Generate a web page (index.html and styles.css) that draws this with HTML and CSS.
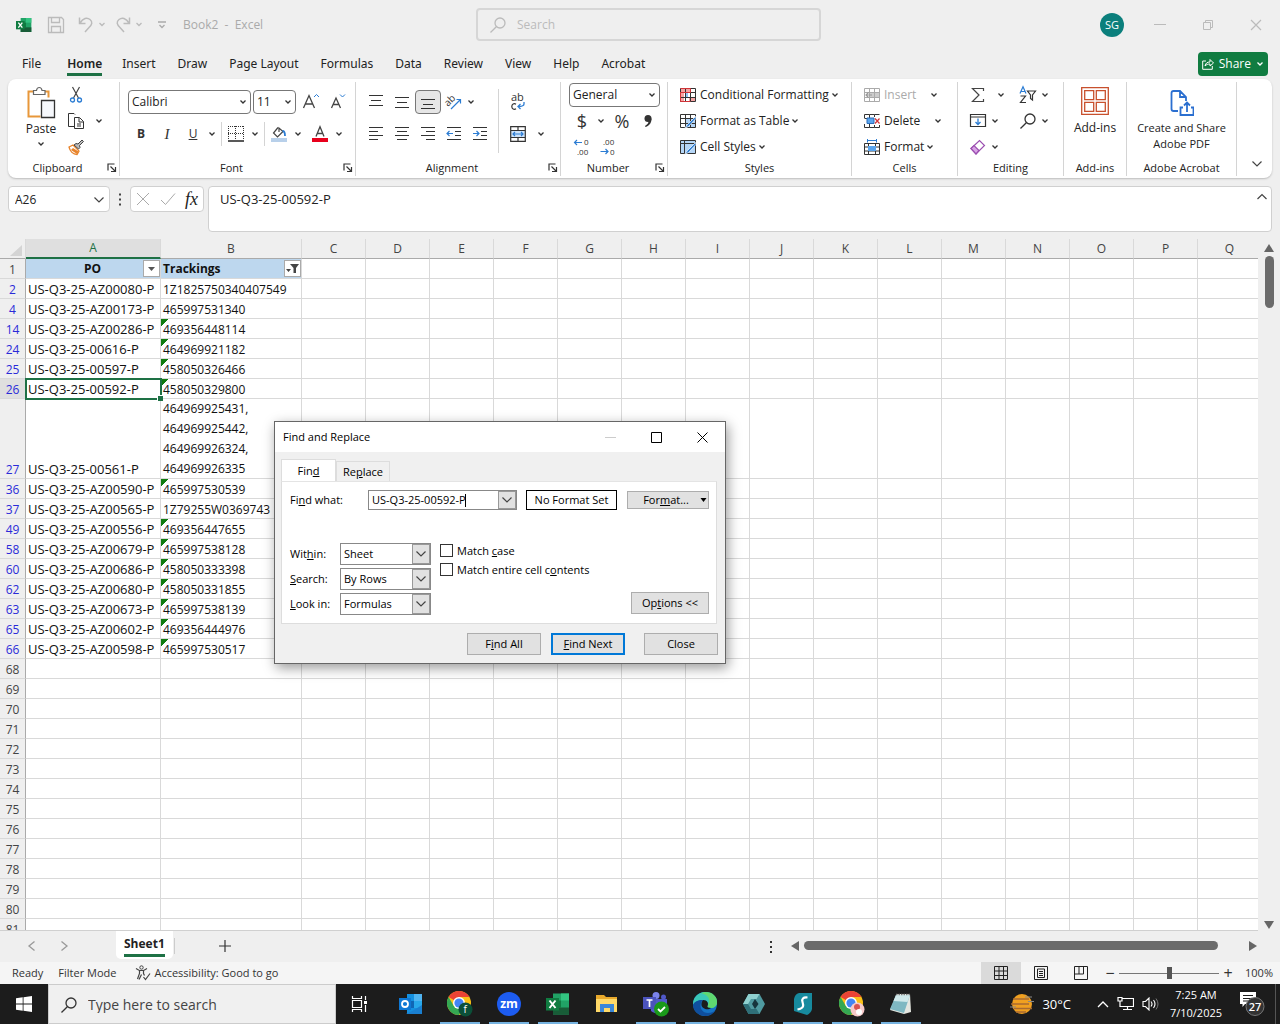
FILE: index.html
```
<!DOCTYPE html>
<html lang="en">
<head>
<meta charset="utf-8">
<title>Book2 - Excel</title>
<link rel="stylesheet" href="styles.css">
</head>
<body>
<svg class="sprite" aria-hidden="true">
  <symbol id="chev" viewBox="0 0 8 8"><path d="M1.5 2.5 4 5l2.500-2.500" fill="none" stroke="#333" stroke-width="1.300"/></symbol>
  <symbol id="chev-lg" viewBox="0 0 12 12"><path d="M1.500 3.500 6 8l4.500-4.500" fill="none" stroke="#444" stroke-width="1.200"/></symbol>
  <symbol id="launch" viewBox="0 0 10 10"><path d="M1 7.500V1h6.500M3.500 3.500 8 8M8.500 4v4.500H4" fill="none" stroke="#333" stroke-width="1.200"/></symbol>
  <symbol id="mag" viewBox="0 0 18 18"><circle cx="11" cy="7" r="5" fill="none" stroke="currentColor" stroke-width="1.300"/><path d="M7.300 10.700 1.500 16.500" stroke="currentColor" stroke-width="1.300"/></symbol>
  <symbol id="al-top" viewBox="0 0 16 16"><path d="M1 1.500h14M3 6.500h10M1 11.500h14" stroke="#333" stroke-width="1.200"/></symbol>
  <symbol id="al-mid" viewBox="0 0 16 16"><path d="M1 3.500h14M3 8.500h10M1 13.500h14" stroke="#333" stroke-width="1.200"/></symbol>
  <symbol id="al-l" viewBox="0 0 16 16"><path d="M1 1.500h14M1 5.500h9M1 9.500h14M1 13.500h9" stroke="#333" stroke-width="1.200"/></symbol>
  <symbol id="al-c" viewBox="0 0 16 16"><path d="M1 1.500h14M3 5.500h10M1 9.500h14M3 13.500h10" stroke="#333" stroke-width="1.200"/></symbol>
  <symbol id="al-r" viewBox="0 0 16 16"><path d="M1 1.500h14M6 5.500h9M1 9.500h14M6 13.500h9" stroke="#333" stroke-width="1.200"/></symbol>
  <symbol id="xl" viewBox="0 0 24 24"><path d="M7 1.500h16v21H7z" fill="#21a366"/><path d="M15 1.500h8v7h-8z" fill="#33c481"/><path d="M7 8.500h8v7H7z" fill="#107c41"/><path d="M7 15.500h16v7H7z" fill="#185c37"/><path d="M0 6h13v12.500H0z" fill="#107c41"/><path d="m3.500 8.500 6 7.500m0-7.500-6 7.500" stroke="#fff" stroke-width="2"/></symbol>
  <symbol id="chrome" viewBox="0 0 24 24"><circle cx="12" cy="12" r="12" fill="#fbc116"/><path d="M12 12 1.600 6A12 12 0 0 1 22.400 6H12z" fill="#ea4335"/><path d="M1.600 6A12 12 0 0 0 12 24l5.200-9L12 12 6.800 15z" fill="#34a853"/><circle cx="12" cy="12" r="6" fill="#fff"/><circle cx="12" cy="12" r="4.600" fill="#4285f4"/></symbol>
  <symbol id="grid16" viewBox="0 0 16 16"><path d="M.5 1.500h15v13H.5zM.5 5.500h15M.5 10.500h15M5.500 1.500v13M10.500 1.500v13" fill="none" stroke="currentColor"/></symbol>
</svg>

<header class="titlebar">
  <div class="quick">
    <svg width="16" height="16"><use href="#xl"/></svg>
    <button class="plain" aria-label="Save"><svg width="18" height="18" viewBox="0 0 18 18"><path d="M1.500 1.500h13l2 2v13h-15zM4.500 1.500v5h8v-5M4.500 16.500v-6h9v6" fill="none" stroke="#bbb" stroke-width="1.300"/></svg></button>
    <button class="plain undo" aria-label="Undo"><svg width="26" height="18" viewBox="0 0 26 18"><path d="M2.500 1.500v6h6M3 7c3-5 7-6 10-3.500s2 5-1 8l-4 4.500" fill="none" stroke="#bbb" stroke-width="1.500"/><path d="m22.500 7 2.500 2.500L27.500 7" fill="none" stroke="#bbb" stroke-width="1.300"/></svg></button>
    <button class="plain undo" aria-label="Redo"><svg width="26" height="18" viewBox="0 0 26 18"><path d="M14.500 1.500v6h-6M14 7c-3-5-7-6-10-3.500s-2 5 1 8L9 16" fill="none" stroke="#bbb" stroke-width="1.500"/><path d="m21.500 7 2.500 2.500L26.500 7" fill="none" stroke="#bbb" stroke-width="1.300"/></svg></button>
    <button class="plain more" aria-label="Customize"><svg width="10" height="10" viewBox="0 0 10 10"><path d="M1 2h8M2.500 5 5 7.500 7.500 5" fill="none" stroke="#aaa" stroke-width="1.300"/></svg></button>
    <span class="doc">Book2&nbsp; -&nbsp; Excel</span>
  </div>
  <label class="searchbox"><svg width="18" height="18"><use href="#mag"/></svg><input type="text" placeholder="Search" aria-label="Search"></label>
  <div class="wincontrols">
    <span class="avatar">SG</span>
    <button class="plain" aria-label="Minimize"><svg width="12" height="12" viewBox="0 0 12 12"><path d="M0 5.500h12" stroke="#bbb"/></svg></button>
    <button class="plain" aria-label="Restore"><svg width="12" height="12" viewBox="0 0 12 12"><path d="M1.500 3.500h7v7h-7zM3.500 3V1.500h7v7H9" fill="none" stroke="#bbb"/></svg></button>
    <button class="plain" aria-label="Close"><svg width="12" height="12" viewBox="0 0 12 12"><path d="m1 1 10 10M11 1 1 11" stroke="#bbb" stroke-width="1.200"/></svg></button>
  </div>
</header>

<nav class="tabs">
  <a href="#file">File</a><a href="#home" class="active">Home</a><a href="#insert">Insert</a><a href="#draw">Draw</a><a href="#page">Page Layout</a><a href="#formulas">Formulas</a><a href="#data">Data</a><a href="#review">Review</a><a href="#view">View</a><a href="#help">Help</a><a href="#acrobat">Acrobat</a>
  <button class="share"><svg width="12" height="12" viewBox="0 0 12 12"><path d="M4 3H.7v8.300h9.600V8M3 8c.5-3 2.500-4 5-4V1.500L11.500 5 8 8V6C6 6 4.500 6.500 3 8z" fill="none" stroke="#fff"/></svg>Share<svg width="8" height="8" viewBox="0 0 8 8"><path d="M1.500 2.500 4 5l2.500-2.500" fill="none" stroke="#fff" stroke-width="1.300"/></svg></button>
</nav>

<section class="ribbon" aria-label="Home">
  <div class="group clipboard">
    <div class="body">
      <button class="big"><svg width="32" height="34" viewBox="0 0 32 34"><path d="M8 5.500H3.500v25h12M20 5.500h3.500v6" fill="none" stroke="#e8973a" stroke-width="2"/><path d="M8.500 8.500v-4h3c.5-4 5-4 5.500 0h3v4z" fill="#fff" stroke="#666" stroke-width="1.200"/><path d="M16.500 14.500h13v17h-13z" fill="#f6f8fc" stroke="#333" stroke-width="1.300"/></svg><span>Paste</span><svg width="8" height="8"><use href="#chev"/></svg></button>
      <div class="stack">
        <div class="row"><button class="ib" aria-label="Cut"><svg width="16" height="16" viewBox="0 0 16 16"><path d="m4.500 0 6 11M11.500 0l-6 11" stroke="#444" stroke-width="1.200"/><circle cx="4.500" cy="13" r="2" fill="none" stroke="#2b7cd3" stroke-width="1.300"/><circle cx="11.500" cy="13" r="2" fill="none" stroke="#2b7cd3" stroke-width="1.300"/></svg></button></div>
        <div class="row"><button class="ib" aria-label="Copy"><svg width="16" height="16" viewBox="0 0 16 16"><path d="M6 13.500H.5v-13H6l1 1M6.500 4.500h5l4 4v7h-9zM11 5v4h4.500M9 11h4M9 13h4" fill="none" stroke="#333"/></svg></button><button class="cb" aria-label="Copy options"><svg width="8" height="8"><use href="#chev"/></svg></button></div>
        <div class="row"><button class="ib" aria-label="Format Painter"><svg width="16" height="16" viewBox="0 0 16 16"><path d="m1 8 4-2 6 6-2 3.500C5 15.500 2 12 1 8z" fill="#fff" stroke="#e8832a" stroke-width="1.300"/><path d="m3 11 6 4 1.500-2.500L5 9z" fill="#e8832a"/><path d="m6 6 2-1.500 2 .5 4-4 1.500 1.500-4 4 .5 2L10.500 10z" fill="#bbb" stroke="#444"/></svg></button></div>
      </div>
    </div>
    <div class="label"><span>Clipboard</span><button class="launch" aria-label="Clipboard settings"><svg width="10" height="10"><use href="#launch"/></svg></button></div>
  </div>

  <div class="group font">
    <div class="body two">
      <div class="row gap">
        <span class="combo fontname"><select aria-label="Font"><option>Calibri</option></select><svg width="8" height="8"><use href="#chev"/></svg></span>
        <span class="combo fontsize"><select aria-label="Font size"><option>11</option></select><svg width="8" height="8"><use href="#chev"/></svg></span>
        <button class="ib" aria-label="Increase font"><svg width="18" height="18" viewBox="0 0 18 18"><path d="M1.500 15 7 2.500 12.500 15M3.500 11h7" fill="none" stroke="#444" stroke-width="1.300"/><path d="m12 4 2.500-2.500L17 4" fill="none" stroke="#2b7cd3"/></svg></button>
        <button class="ib" aria-label="Decrease font"><svg width="18" height="18" viewBox="0 0 18 18"><path d="M1.500 15 6 5l4.500 10M3 11.500h6" fill="none" stroke="#444" stroke-width="1.300"/><path d="M10 1.500 12.500 4 15 1.500" fill="none" stroke="#2b7cd3"/></svg></button>
      </div>
      <div class="row">
        <button class="ib bold">B</button><button class="ib ital">I</button><button class="ib under">U</button><button class="cb" aria-label="Underline options"><svg width="8" height="8"><use href="#chev"/></svg></button>
        <i class="vs"></i>
        <button class="ib" aria-label="Borders"><svg width="16" height="16" viewBox="0 0 16 16"><path d="M0 .5h16M.5 0v14M15.500 0v14M7.500 0v14M0 7.500h16" fill="none" stroke="#333" stroke-dasharray="1 1"/><path d="M0 15h16" stroke="#222" stroke-width="1.500"/></svg></button><button class="cb" aria-label="Border options"><svg width="8" height="8"><use href="#chev"/></svg></button>
        <i class="vs"></i>
        <button class="ib" aria-label="Fill colour"><svg width="16" height="16" viewBox="0 0 16 16"><path d="M0 12h16v4H0z" fill="#b8d0ea"/><path d="M7 1.500 2.500 7l4 4L12 5.500 8 2v4" fill="none" stroke="#444" stroke-width="1.200"/><path d="M11.500 5c2 0 2.500 2 2.500 5" fill="none" stroke="#2b7cd3" stroke-width="1.800"/></svg></button><button class="cb" aria-label="Fill options"><svg width="8" height="8"><use href="#chev"/></svg></button>
        <button class="ib fontcolor" aria-label="Font colour"><svg width="16" height="16" viewBox="0 0 16 16"><path d="M0 12h16v4H0z" fill="#e8001c"/><path d="M4 10.500 8 .8l4 9.700M5.500 7.500h5" fill="none" stroke="#444" stroke-width="1.300"/></svg></button><button class="cb" aria-label="Font colour options"><svg width="8" height="8"><use href="#chev"/></svg></button>
      </div>
    </div>
    <div class="label"><span>Font</span><button class="launch" aria-label="Font settings"><svg width="10" height="10"><use href="#launch"/></svg></button></div>
  </div>

  <div class="group alignment">
    <div class="body">
      <div class="two">
        <div class="row">
          <button class="ib" aria-label="Top align"><svg width="16" height="16"><use href="#al-top"/></svg></button>
          <button class="ib" aria-label="Middle align"><svg width="16" height="16"><use href="#al-mid"/></svg></button>
          <button class="ib on" aria-label="Bottom align"><svg width="16" height="16" viewBox="0 0 16 16"><path d="M1 5.500h14M3 10.500h10M1 14.500h14" stroke="#333" stroke-width="1.200"/></svg></button>
          <button class="ib" aria-label="Orientation"><svg width="18" height="18" viewBox="0 0 18 18"><text x="0" y="11" font-size="10" fill="#333" transform="rotate(-45 5 9)">ab</text><path d="m6 16 9-9M11.500 6.500h4v4" fill="none" stroke="#2b7cd3" stroke-width="1.200"/></svg></button><button class="cb slim" aria-label="Orientation options"><svg width="8" height="8"><use href="#chev"/></svg></button>
        </div>
        <div class="row">
          <button class="ib" aria-label="Align left"><svg width="16" height="16"><use href="#al-l"/></svg></button>
          <button class="ib" aria-label="Centre"><svg width="16" height="16"><use href="#al-c"/></svg></button>
          <button class="ib" aria-label="Align right"><svg width="16" height="16"><use href="#al-r"/></svg></button>
          <button class="ib" aria-label="Decrease indent"><svg width="16" height="16" viewBox="0 0 16 16"><path d="M1 1.500h14M9 5.500h6M9 9.500h6M1 13.500h14" stroke="#333" stroke-width="1.200"/><path d="M7 7.500H1M3.500 5 1 7.500 3.500 10" fill="none" stroke="#2b7cd3" stroke-width="1.200"/></svg></button>
          <button class="ib" aria-label="Increase indent"><svg width="16" height="16" viewBox="0 0 16 16"><path d="M1 1.500h14M9 5.500h6M9 9.500h6M1 13.500h14" stroke="#333" stroke-width="1.200"/><path d="M1 7.500h6M4.500 5 7 7.500 4.500 10" fill="none" stroke="#2b7cd3" stroke-width="1.200"/></svg></button>
        </div>
      </div>
      <i class="vs tall"></i>
      <div class="two">
        <div class="row"><button class="ib" aria-label="Wrap text"><svg width="16" height="18" viewBox="0 0 16 18"><text x="1" y="8" font-size="11" fill="#333">ab</text><path d="M6 11.200c-2-1.200-4.200 0-4.200 2.300s2.200 3.500 4.200 2.300" fill="none" stroke="#333" stroke-width="1.200"/><path d="M14 9v2c0 2-2 2.500-6 2.500M10.500 11 8 13.500l2.500 2.500" fill="none" stroke="#2b7cd3" stroke-width="1.300"/></svg></button></div>
        <div class="row"><button class="ib" aria-label="Merge"><svg width="16" height="16" viewBox="0 0 16 16"><path d="M1 4.500h14v7H1z" fill="#cfe4fa"/><path d="M.7.7h14.600v14.600H.7zM.7 4.500h14.600M.7 11.500h14.600M8 .7v3.800M8 11.500v3.800" fill="none" stroke="#333" stroke-width="1.200"/><path d="M3 8h10M5 6 3 8l2 2M11 6l2 2-2 2" fill="none" stroke="#2b7cd3" stroke-width="1.200"/></svg></button><button class="cb wide" aria-label="Merge options"><svg width="8" height="8"><use href="#chev"/></svg></button></div>
      </div>
    </div>
    <div class="label"><span>Alignment</span><button class="launch" aria-label="Alignment settings"><svg width="10" height="10"><use href="#launch"/></svg></button></div>
  </div>

  <div class="group number">
    <div class="body col">
      <div class="row"><span class="combo format"><select aria-label="Number format"><option>General</option></select><svg width="8" height="8"><use href="#chev"/></svg></span></div>
      <div class="row"><button class="ib sym">$</button><button class="cb" aria-label="Currency options"><svg width="8" height="8"><use href="#chev"/></svg></button><button class="ib sym pct">%</button><button class="ib comma" aria-label="Comma style"><svg width="10" height="14" viewBox="0 0 10 14"><circle cx="5" cy="4.500" r="3.500" fill="#333"/><path d="M8.500 4.500C8.500 9 6.500 11.500 2.500 13L2 12c2.500-1.500 3.500-3 3.500-5z" fill="#333"/></svg></button></div>
      <div class="row"><button class="ib" aria-label="Increase decimal"><svg width="18" height="18" viewBox="0 0 18 18"><text x="11" y="7" font-size="8" fill="#333">0</text><text x="4" y="17" font-size="8" fill="#333">.00</text><path d="M9 4.500H1.500M4 2 1.500 4.500 4 7" fill="none" stroke="#2b7cd3" stroke-width="1.200"/></svg></button><button class="ib" aria-label="Decrease decimal"><svg width="18" height="18" viewBox="0 0 18 18"><text x="4" y="7" font-size="8" fill="#333">.00</text><text x="11" y="17" font-size="8" fill="#333">0</text><path d="M1.500 13.500H9M6.500 11 9 13.500 6.500 16" fill="none" stroke="#2b7cd3" stroke-width="1.200"/></svg></button></div>
    </div>
    <div class="label"><span>Number</span><button class="launch" aria-label="Number settings"><svg width="10" height="10"><use href="#launch"/></svg></button></div>
  </div>

  <div class="group styles">
    <div class="body col">
      <div class="row"><button class="tb"><svg width="16" height="16" viewBox="0 0 16 16"><path d="M1 1h9v5H1zM1 6h3v8H1zM9 10h6v4H9z" fill="#f5a3a3"/><path d="M5 6h3v4H5z" fill="#8ec1f5"/><path d="M.5 1.500h15v13H.5zM.5 5.500h15M.5 10.500h15M5.500 1.500v13M10.500 1.500v13" fill="none" stroke="#333"/><path d="M.5 1.500h10v4H.5M.5 5v9.500h10" fill="none" stroke="#d13438"/></svg>Conditional Formatting<svg width="8" height="8"><use href="#chev"/></svg></button></div>
      <div class="row"><button class="tb"><svg width="16" height="16" viewBox="0 0 16 16"><path d="M5 5h10v9H5z" fill="#b5d6f7"/><use href="#grid16" color="#333"/><path d="m15.500 3.500-8 8-3 4 4-2 7.500-8z" fill="#2b7cd3" stroke="#fff" stroke-width=".7"/></svg>Format as Table<svg width="8" height="8"><use href="#chev"/></svg></button></div>
      <div class="row"><button class="tb"><svg width="16" height="16" viewBox="0 0 16 16"><path d="M1 2h14v12H1z" fill="#b5d6f7"/><path d="M.5 1.500h15v13H.5zM.5 4.500h15M4.500 1.500v13" fill="none" stroke="#333"/><path d="m15.500 3.500-8 8-3 4 4-2 7.500-8z" fill="#2b7cd3" stroke="#fff" stroke-width=".7"/></svg>Cell Styles<svg width="8" height="8"><use href="#chev"/></svg></button></div>
    </div>
    <div class="label"><span>Styles</span></div>
  </div>

  <div class="group cells">
    <div class="body col">
      <div class="row"><button class="tb off"><svg width="16" height="16" viewBox="0 0 16 16"><path d="M5 5h10v5H5z" fill="#ccc"/><use href="#grid16" color="#aaa"/><path d="M8 8H2M4.500 5.500 2 8l2.500 2.500" fill="none" stroke="#999" stroke-width="1.200"/></svg>Insert</button><button class="cb" aria-label="Insert options"><svg width="8" height="8"><use href="#chev"/></svg></button></div>
      <div class="row"><button class="tb"><svg width="16" height="16" viewBox="0 0 16 16"><path d="M.5 5V1.500h5V5M5.500 1.500h5V4M10.500 1.500h5M.5 11v3.500h5V11M5.500 14.500h5V12M10.500 14.500h5V12M.5 5.500h4" fill="none" stroke="#333"/><path d="M3 5h7v5.500H3z" fill="#5aa5ee" stroke="#2b6cb8"/><path d="m11 5.500 4.500 5M15.500 5.500l-4.500 5" stroke="#d13438" stroke-width="1.200"/></svg>Delete</button><button class="cb" aria-label="Delete options"><svg width="8" height="8"><use href="#chev"/></svg></button></div>
      <div class="row"><button class="tb"><svg width="16" height="16" viewBox="0 0 16 16"><path d="M.5 4.500h15v11H.5zM.5 8h15M.5 12h15M4.500 4.500v11M11.500 4.500v11" fill="none" stroke="#333"/><path d="M4 7h8v5H4z" fill="#5aa5ee"/><path d="M3.500 0v3.500M12.500 0v3.500M4 1.500h8" stroke="#2b7cd3"/></svg>Format<svg width="8" height="8"><use href="#chev"/></svg></button></div>
    </div>
    <div class="label"><span>Cells</span></div>
  </div>

  <div class="group editing">
    <div class="body">
      <div class="col left">
        <div class="row"><button class="ib" aria-label="AutoSum"><svg width="16" height="16" viewBox="0 0 16 16"><path d="M13.500 4V1.500h-11L9 8l-6.500 6.500h11V12" fill="none" stroke="#444" stroke-width="1.200"/></svg></button><button class="cb sum" aria-label="AutoSum options"><svg width="8" height="8"><use href="#chev"/></svg></button></div>
        <div class="row"><button class="ib" aria-label="Fill"><svg width="16" height="16" viewBox="0 0 16 16"><path d="M.5 1.500h15v12H.5zM.5 4h15" fill="none" stroke="#333" stroke-width="1.200"/><path d="M8 5.500v6M5.500 9 8 11.500 10.500 9" fill="none" stroke="#2b7cd3" stroke-width="1.300"/></svg></button><button class="cb slim" aria-label="Fill options"><svg width="8" height="8"><use href="#chev"/></svg></button></div>
        <div class="row"><button class="ib" aria-label="Clear"><svg width="16" height="16" viewBox="0 0 16 16"><path d="m1 9.500 8.500-8 5 5L6 15z" fill="#fff" stroke="#9b4fb0" stroke-width="1.200"/><path d="m1 9.500 3-3 5 5L6 15z" fill="#d9a3e6" stroke="#9b4fb0" stroke-width="1.200"/></svg></button><button class="cb slim" aria-label="Clear options"><svg width="8" height="8"><use href="#chev"/></svg></button></div>
      </div>
      <div class="col">
        <div class="row"><button class="ib" aria-label="Sort and Filter"><svg width="18" height="18" viewBox="0 0 18 18"><path d="M1 7.500 4 .8l3 6.700M2 5.500h4" fill="none" stroke="#2b7cd3" stroke-width="1.200"/><path d="M1.500 10h5l-5 6.500H7M8.500 5h8l-3 4v5l-2-1.500V9z" fill="none" stroke="#333" stroke-width="1.200"/></svg></button><button class="cb slim" aria-label="Sort options"><svg width="8" height="8"><use href="#chev"/></svg></button></div>
        <div class="row"><button class="ib dark" aria-label="Find"><svg width="18" height="18"><use href="#mag"/></svg></button><button class="cb slim" aria-label="Find options"><svg width="8" height="8"><use href="#chev"/></svg></button></div>
      </div>
    </div>
    <div class="label"><span>Editing</span></div>
  </div>

  <div class="group addins">
    <div class="body"><button class="big"><svg width="28" height="28" viewBox="0 0 28 28"><path d="M.7.7h26.600v26.600H.7zM3.700 3.700h9v9h-9zM15.300 3.700h9v9h-9zM3.700 15.300h9v9h-9zM15.300 15.300h9v9h-9z" fill="none" stroke="#c8502d" stroke-width="1.300"/></svg><span>Add-ins</span></button></div>
    <div class="label"><span>Add-ins</span></div>
  </div>

  <div class="group acrobat">
    <div class="body"><button class="big"><svg width="24" height="28" viewBox="0 0 24 28"><path d="M8 22H3.500Q1.500 22 1.500 20V4Q1.500 2 3.500 2H10l6 6v4M10 2v6h6M13 18.500h-2.500v7.500h13v-7.500H21M17 23v-9M14 16.500 17 13.500l3 3" fill="none" stroke="#2b6fd0" stroke-width="1.800"/></svg><span>Create and Share<br>Adobe PDF</span></button></div>
    <div class="label"><span>Adobe Acrobat</span></div>
  </div>
  <button class="plain collapse" aria-label="Collapse ribbon"><svg width="12" height="12"><use href="#chev-lg"/></svg></button>
</section>

<section class="formulabar">
  <div class="namebox"><input type="text" value="A26" aria-label="Name box"><svg width="12" height="12"><use href="#chev-lg"/></svg></div>
  <svg class="dots" width="4" height="14" viewBox="0 0 4 14"><path d="M1 1.500h2v2H1zM1 6.500h2v2H1zM1 11.500h2v2H1z" fill="#444"/></svg>
  <div class="fxbox">
    <button class="plain" aria-label="Cancel"><svg width="14" height="14" viewBox="0 0 14 14"><path d="m1 1 12 12M13 1 1 13" stroke="#aaa"/></svg></button>
    <button class="plain" aria-label="Enter"><svg width="16" height="14" viewBox="0 0 16 14"><path d="m1 8 4.500 4.500L15 1.500" fill="none" stroke="#aaa"/></svg></button>
    <button class="plain fx">fx</button>
  </div>
  <div class="formula"><input type="text" value="US-Q3-25-00592-P" aria-label="Formula"><svg width="12" height="12" viewBox="0 0 12 12"><path d="M1.500 8 6 3.500 10.500 8" fill="none" stroke="#444" stroke-width="1.200"/></svg></div>
</section>

<main class="sheet">
  <div class="gridwrap">
    <table class="grid">
      <colgroup><col class="c-h"><col class="c-a"><col class="c-b"><col span="15" class="c-x"></colgroup>
      <thead><tr><th class="corner"><svg width="12" height="11" viewBox="0 0 12 11"><path d="M12 0v11H0z" fill="#d4d4d4"/></svg></th><th class="sel">A</th><th>B</th><th>C</th><th>D</th><th>E</th><th>F</th><th>G</th><th>H</th><th>I</th><th>J</th><th>K</th><th>L</th><th>M</th><th>N</th><th>O</th><th>P</th><th>Q</th></tr></thead>
      <tbody>
        <tr class="head"><th class="un">1</th><td><div class="hc mid"><b>PO</b><button class="filter" aria-label="Filter PO"><svg width="15" height="15" viewBox="0 0 15 15"><path d="M4 6h7l-3.500 4z" fill="#555"/></svg></button></div></td><td><div class="hc"><b>Trackings</b><button class="filter" aria-label="Filter Trackings"><svg width="15" height="15" viewBox="0 0 15 15"><path d="M5 3h9l-3 4v5H8.500V7zM1 8h5l-2.500 3z" fill="#444"/></svg></button></div></td><td class="rest" colspan="15"></td></tr>
        <tr><th>2</th><td>US-Q3-25-AZ00080-P</td><td>1Z1825750340407549</td><td class="rest" colspan="15"></td></tr>
        <tr><th>4</th><td>US-Q3-25-AZ00173-P</td><td>465997531340</td><td class="rest" colspan="15"></td></tr>
        <tr><th>14</th><td>US-Q3-25-AZ00286-P</td><td class="err">469356448114</td><td class="rest" colspan="15"></td></tr>
        <tr><th>24</th><td>US-Q3-25-00616-P</td><td class="err">464969921182</td><td class="rest" colspan="15"></td></tr>
        <tr><th>25</th><td>US-Q3-25-00597-P</td><td class="err">458050326466</td><td class="rest" colspan="15"></td></tr>
        <tr><th class="cur">26</th><td class="active">US-Q3-25-00592-P<i class="handle"></i></td><td class="err">458050329800</td><td class="rest" colspan="15"></td></tr>
        <tr><th>27</th><td>US-Q3-25-00561-P</td><td><div class="lines">464969925431,<br>464969925442,<br>464969926324,<br>464969926335</div></td><td class="rest" colspan="15"></td></tr>
        <tr><th>36</th><td>US-Q3-25-AZ00590-P</td><td class="err">465997530539</td><td class="rest" colspan="15"></td></tr>
        <tr><th>37</th><td>US-Q3-25-AZ00565-P</td><td>1Z79255W0369743</td><td class="rest" colspan="15"></td></tr>
        <tr><th>49</th><td>US-Q3-25-AZ00556-P</td><td class="err">469356447655</td><td class="rest" colspan="15"></td></tr>
        <tr><th>58</th><td>US-Q3-25-AZ00679-P</td><td class="err">465997538128</td><td class="rest" colspan="15"></td></tr>
        <tr><th>60</th><td>US-Q3-25-AZ00686-P</td><td class="err">458050333398</td><td class="rest" colspan="15"></td></tr>
        <tr><th>62</th><td>US-Q3-25-AZ00680-P</td><td class="err">458050331855</td><td class="rest" colspan="15"></td></tr>
        <tr><th>63</th><td>US-Q3-25-AZ00673-P</td><td class="err">465997538139</td><td class="rest" colspan="15"></td></tr>
        <tr><th>65</th><td>US-Q3-25-AZ00602-P</td><td class="err">469356444976</td><td class="rest" colspan="15"></td></tr>
        <tr><th>66</th><td>US-Q3-25-AZ00598-P</td><td class="err">465997530517</td><td class="rest" colspan="15"></td></tr>
        <tr><th class="un">68</th><td></td><td></td><td class="rest" colspan="15"></td></tr>
        <tr><th class="un">69</th><td></td><td></td><td class="rest" colspan="15"></td></tr>
        <tr><th class="un">70</th><td></td><td></td><td class="rest" colspan="15"></td></tr>
        <tr><th class="un">71</th><td></td><td></td><td class="rest" colspan="15"></td></tr>
        <tr><th class="un">72</th><td></td><td></td><td class="rest" colspan="15"></td></tr>
        <tr><th class="un">73</th><td></td><td></td><td class="rest" colspan="15"></td></tr>
        <tr><th class="un">74</th><td></td><td></td><td class="rest" colspan="15"></td></tr>
        <tr><th class="un">75</th><td></td><td></td><td class="rest" colspan="15"></td></tr>
        <tr><th class="un">76</th><td></td><td></td><td class="rest" colspan="15"></td></tr>
        <tr><th class="un">77</th><td></td><td></td><td class="rest" colspan="15"></td></tr>
        <tr><th class="un">78</th><td></td><td></td><td class="rest" colspan="15"></td></tr>
        <tr><th class="un">79</th><td></td><td></td><td class="rest" colspan="15"></td></tr>
        <tr><th class="un">80</th><td></td><td></td><td class="rest" colspan="15"></td></tr>
        <tr><th class="un">81</th><td></td><td></td><td class="rest" colspan="15"></td></tr>
      </tbody>
    </table>
  </div>
  <div class="vscroll">
    <svg width="10" height="8" viewBox="0 0 10 8"><path d="M5 0l5 8H0z" fill="#666"/></svg>
    <i class="vthumb"></i>
    <svg class="down" width="10" height="8" viewBox="0 0 10 8"><path d="M0 0h10L5 8z" fill="#666"/></svg>
  </div>
</main>

<div class="sheettabs">
  <button class="plain nav" aria-label="Previous sheet"><svg width="10" height="12" viewBox="0 0 10 12"><path d="M7.500 1.500 2 6l5.500 4.500" fill="none" stroke="#999" stroke-width="1.300"/></svg></button>
  <button class="plain nav" aria-label="Next sheet"><svg width="10" height="12" viewBox="0 0 10 12"><path d="M2.500 1.500 8 6l-5.500 4.500" fill="none" stroke="#999" stroke-width="1.300"/></svg></button>
  <button class="sheettab"><span>Sheet1</span></button>
  <i class="tabsep"></i>
  <button class="plain add" aria-label="New sheet"><svg width="12" height="12" viewBox="0 0 12 12"><path d="M6 0v12M0 6h12" stroke="#333" stroke-width="1.200"/></svg></button>
  <div class="hscroll">
    <svg width="4" height="14" viewBox="0 0 4 14"><path d="M1 2h2v2H1zM1 7h2v2H1zM1 12h2v2H1z" fill="#333"/></svg>
    <svg class="hl" width="8" height="10" viewBox="0 0 8 10"><path d="M8 0v10L0 5z" fill="#666"/></svg>
    <div class="htrack"><i class="hthumb"></i></div>
    <svg width="8" height="10" viewBox="0 0 8 10"><path d="M0 0v10l8-5z" fill="#666"/></svg>
  </div>
</div>

<footer class="status">
  <span>Ready</span><span>Filter Mode</span>
  <span class="acc"><svg width="16" height="16" viewBox="0 0 16 16"><circle cx="6.500" cy="2.500" r="1.700" fill="none" stroke="#444"/><path d="M1 3.500 4.500 5.500v3L2.500 14M12 3.500 8.500 5.500v3l1 2M4.500 5.500h4M6.500 9.500 4 14.500M8.500 12l2 2.500 4.500-6" fill="none" stroke="#444" stroke-width="1.200"/></svg>Accessibility: Good to go</span>
  <div class="views">
    <button class="view on" aria-label="Normal view"><svg width="14" height="14" viewBox="0 0 14 14"><path d="M.5.5h13v13H.5zM.5 5h13M.5 9.500h13M5 .5v13M9.500.5v13" fill="none" stroke="#222"/></svg></button>
    <button class="view" aria-label="Page layout view"><svg width="14" height="14" viewBox="0 0 14 14"><path d="M.5.5h13v13H.5zM3.500 3h7v8.500h-7zM5 5.500h4M5 7.500h4M5 9.500h4" fill="none" stroke="#222"/></svg></button>
    <button class="view" aria-label="Page break view"><svg width="14" height="14" viewBox="0 0 14 14"><path d="M.5.5h13v13H.5zM5 .5v7.500h4.500V.5M.5 8H5" fill="none" stroke="#222"/></svg></button>
  </div>
  <span class="zm">−</span><input class="zoom" type="range" min="0" max="100" value="50" aria-label="Zoom"><span class="zm">+</span><span class="pc">100%</span>
</footer>

<div class="taskbar">
  <button class="task start" aria-label="Start"><svg width="16" height="16" viewBox="0 0 16 16"><path d="M0 2.200 6.700 1.300v6.300H0zM7.500 1.200 16 0v7.600H7.500zM0 8.400h6.700v6.300L0 13.800zM7.500 8.400H16V16l-8.500-1.200z" fill="#fff"/></svg></button>
  <label class="tsearch"><svg width="18" height="18"><use href="#mag"/></svg><input type="text" placeholder="Type here to search" aria-label="Type here to search"></label>
  <button class="task start" aria-label="Task view"><svg width="18" height="16" viewBox="0 0 18 16"><path d="M1.500 4.500h9v7h-9zM1.500 0v2.500h9V0M1.500 16v-2.500h9V16M14.500 0v4M14.500 9v7" fill="none" stroke="#fff" stroke-width="1.200"/><path d="M13 5h3v3h-3z" fill="#fff"/></svg></button>
  <div class="apps">
    <button class="app" aria-label="Outlook"><svg width="24" height="24" viewBox="0 0 24 24"><path d="M8 2h15v20H8z" fill="#1490df"/><path d="M15 2h8v7h-8z" fill="#50b4f0"/><path d="M8 9h7v7H8z" fill="#1066b5"/><path d="M15 9h8v7h-8z" fill="#28a8ea"/><path d="M7 22h16v-9l-8 5z" fill="#1a7fd0"/><path d="M0 6h12v12H0z" fill="#0f78d4"/><circle cx="6" cy="12" r="3" fill="none" stroke="#fff" stroke-width="1.800"/></svg></button>
    <button class="app run" aria-label="Chrome"><svg width="26" height="26" viewBox="0 0 26 26"><use href="#chrome" width="24" height="24"/><circle cx="18.500" cy="18.500" r="7" fill="#0b4f38"/><text x="16.500" y="22" font-size="10" fill="#fff">f</text></svg></button>
    <button class="app run" aria-label="Zoom"><svg width="24" height="24" viewBox="0 0 24 24"><circle cx="12" cy="12" r="12" fill="#1d5cf0"/><text x="12" y="16" font-size="12" font-weight="700" text-anchor="middle" fill="#fff">zm</text></svg></button>
    <button class="app run" aria-label="Excel"><svg width="24" height="24"><use href="#xl"/></svg></button>
    <button class="app" aria-label="File Explorer"><svg width="24" height="24" viewBox="0 0 24 24"><path d="M1 3h8l2 2h11v15H1z" fill="#e8a92c"/><path d="M1 7h21v13H1z" fill="#ffd968"/><path d="M5 20v-8h14v8h-4v-4H9v4z" fill="#3a86d8"/></svg></button>
    <button class="app run" aria-label="Teams"><svg width="26" height="26" viewBox="0 0 26 26"><circle cx="13" cy="4.500" r="3.500" fill="#7b83eb"/><circle cx="20.500" cy="6" r="2.500" fill="#5059c9"/><path d="M8 8h16v8c0 5-10 9-16 4z" fill="#5059c9"/><path d="M0 6h13v12H0z" fill="#4b53bc"/><path d="M3.500 9h6M6.500 9v7" stroke="#fff" stroke-width="1.700"/><circle cx="18.500" cy="18" r="7.500" fill="#1a9a1a"/><path d="m15 18 2.500 2.500L22 16" fill="none" stroke="#fff" stroke-width="1.800"/></svg></button>
    <button class="app run" aria-label="Edge"><svg width="24" height="24" viewBox="0 0 24 24"><circle cx="12" cy="12" r="12" fill="#1573c6"/><path d="M0 12C0 4 7 0 12 0c8 0 12 5 12 10 0 4-3 6-6 6-3 0-4-1-3.500-2C16 11 14 8 10 8 5 8 1 10 0 14z" fill="#3ac8b8"/><path d="M12 0c8 0 12 5 12 10 0 4-3 6-6 6-3 0-4-1-3.500-2C18 8 16 3 8 1z" fill="#5fd870"/><path d="M10 8c-5 5-2 13 5 13 3 0 6-1 7.500-3C20 23 14 25 9 23.500 3 22 0 17 0 13c1-3 5-5.500 10-5z" fill="#0f4f9e"/><path d="M10 8c4 0 6 3 4.500 6-.5 1 .5 2 3.500 2-3 2.500-9 1-9.500-3C8.300 11 9 9 10 8z" fill="#1c1c1c"/></svg></button>
    <button class="app run" aria-label="Hexagon app"><svg width="24" height="24" viewBox="0 0 24 24"><path d="M6.500 2h11L23 12l-5.500 10h-11L1 12z" fill="#4f9aa0"/><path d="M6.500 2h11l-3 5H9l-3 5H1z" fill="#8fd0cf"/><path d="M1 12h5l3 5h5.500l3 5h-11z" fill="#2f6f78"/><path d="m13 7 3.500 5L13 17l-3-5z" fill="#16343c"/></svg></button>
    <button class="app run" aria-label="Surfshark"><svg width="24" height="24" viewBox="0 0 24 24"><path d="M8 1h13v16q-1 4-5 6L3 19V7q1-5 5-6z" fill="#178a9e"/><path d="M16.500 5.500C12 5 10.500 7 11.500 10s2 6-5 7.500" fill="none" stroke="#fff" stroke-width="2.200"/></svg></button>
    <button class="app run" aria-label="Chrome profile"><svg width="26" height="26" viewBox="0 0 26 26"><use href="#chrome" width="24" height="24"/><circle cx="18.500" cy="18.500" r="7" fill="#f6c9c9"/><circle cx="18" cy="16" r="3" fill="#d9534f"/><circle cx="20" cy="21" r="3" fill="#fff"/></svg></button>
    <button class="app run" aria-label="Notepad"><svg width="24" height="24" viewBox="0 0 24 24"><path d="M8 2h13l1 18-7 2-14-4z" fill="#e4e6e0"/><path d="M7 3h14l-6 18-14-4z" fill="#7fb8c2"/><path d="M7 3h14l-2.500 7-14-1z" fill="#cfe8ea"/><path d="M7 2.500h14" stroke="#777" stroke-width="1.500" stroke-dasharray="1.500 1"/></svg></button>
  </div>
  <div class="tray">
    <svg width="24" height="22" viewBox="0 0 24 22"><circle cx="12" cy="11" r="10" fill="#f0a020"/><path d="M3 6h16M1 11h18M4 15.500h18M6 19h10" stroke="#a86a30" stroke-width="1.500"/><path d="M15 4h7M18 8.500h6M0 14h6" stroke="#888" stroke-width="1.200"/></svg>
    <span class="temp">30°C</span>
    <svg width="12" height="8" viewBox="0 0 12 8"><path d="m1 7 5-5 5 5" fill="none" stroke="#fff" stroke-width="1.300"/></svg>
    <svg width="17" height="16" viewBox="0 0 17 16"><path d="M5.500 2.500h11v8h-11M3 5.500v5h3M10.500 10.500v3M6 13.500h9M1 1.500h4v3.500H1z" fill="none" stroke="#fff" stroke-width="1.200"/></svg>
    <svg width="17" height="14" viewBox="0 0 17 14"><path d="M1 4.500h2.500L7 1v12L3.500 9.500H1zM9 4.500q2 2.500 0 5M11.500 3q3 4 0 8" fill="none" stroke="#fff" stroke-width="1.100"/><path d="M14 1.500q4 5.500 0 11" fill="none" stroke="#777"/></svg>
    <div class="clock"><span>7:25 AM</span><span>7/10/2025</span></div>
    <svg class="notif" width="27" height="26" viewBox="0 0 27 26"><path d="M1 1h16v12H6l-2.500 3v-3H1z" fill="#fff"/><path d="M4 4.500h10M4 7.500h10M4 10h6" stroke="#1c1c1c"/><circle cx="16" cy="15.500" r="9" fill="#333" stroke="#777"/><text x="16" y="20" font-size="11" font-weight="600" text-anchor="middle" fill="#fff">27</text></svg>
    <i class="peek"></i>
  </div>
</div>

<div class="dialog" role="dialog" aria-label="Find and Replace">
  <div class="dtitle"><span>Find and Replace</span>
    <button class="plain" aria-label="Minimize dialog"><svg width="11" height="11" viewBox="0 0 11 11"><path d="M0 5.500h11" stroke="#ccc"/></svg></button>
    <button class="plain" aria-label="Maximize dialog"><svg width="11" height="11" viewBox="0 0 11 11"><path d="M.5.5h10v10H.5z" fill="none" stroke="#000"/></svg></button>
    <button class="plain" aria-label="Close dialog"><svg width="11" height="11" viewBox="0 0 11 11"><path d="m.5.5 10 10M10.500.5l-10 10" stroke="#000"/></svg></button>
  </div>
  <div class="dtabs"><button class="dtab on">Fin<u>d</u></button><button class="dtab">Re<u>p</u>lace</button></div>
  <div class="panel">
    <div class="find">
      <label for="what">Fi<u>n</u>d what:</label>
      <span class="field"><span class="typed"><input id="what" type="text" value="US-Q3-25-00592-P"><i class="caret"></i></span><button class="drop" aria-label="History"><svg width="12" height="12"><use href="#chev-lg"/></svg></button></span>
      <output class="preview">No Format Set</output>
      <button class="btn fmt">For<u>m</u>at...<svg width="7" height="4" viewBox="0 0 7 4"><path d="M.5 0h6l-3 4z" fill="#000"/></svg></button>
    </div>
    <div class="opts">
      <div class="selects">
        <label for="within">Wit<u>h</u>in:</label><span class="field"><select id="within"><option>Sheet</option></select><span class="drop"><svg width="12" height="12"><use href="#chev-lg"/></svg></span></span>
        <label for="order"><u>S</u>earch:</label><span class="field"><select id="order"><option>By Rows</option></select><span class="drop"><svg width="12" height="12"><use href="#chev-lg"/></svg></span></span>
        <label for="look"><u>L</u>ook in:</label><span class="field"><select id="look"><option>Formulas</option></select><span class="drop"><svg width="12" height="12"><use href="#chev-lg"/></svg></span></span>
      </div>
      <div class="checks">
        <label><input type="checkbox">Match <u>c</u>ase</label>
        <label><input type="checkbox">Match entire cell c<u>o</u>ntents</label>
        <button class="btn options">Op<u>t</u>ions &lt;&lt;</button>
      </div>
    </div>
  </div>
  <div class="dfoot"><button class="btn">F<u>i</u>nd All</button><button class="btn primary"><u>F</u>ind Next</button><button class="btn close">Close</button></div>
</div>
</body>
</html>
```
FILE: styles.css
```
* { box-sizing: border-box; }
body {
  margin: 0;
  height: 100vh;
  display: flex;
  flex-direction: column;
  overflow: hidden;
  background: #efefef;
  color: #222;
  font: 12px/16px "Open Sans", "Noto Sans", sans-serif;
}
button, input, select { font: inherit; color: inherit; margin: 0; padding: 0; border: 0; background: none; border-radius: 0; }
input, select { min-width: 0; outline: 0; appearance: none; }
svg { display: block; flex: none; }
.sprite { width: 0; height: 0; position: absolute; }
.plain { display: flex; align-items: center; justify-content: center; }

/* title bar */
.titlebar { flex: none; height: 48px; display: grid; grid-template-columns: 476px minmax(0, 345px) 1fr; align-items: center; padding-top: 1px; }
.quick { display: flex; align-items: center; padding-left: 16px; }
.quick .plain { margin-left: 15px; }
.quick .undo { margin-left: 12px; }
.quick .undo svg { overflow: visible; }
.quick .more { margin-left: 16px; }
.doc { margin-left: 16px; color: #aaa; white-space: nowrap; }
.searchbox { display: flex; align-items: center; gap: 10px; height: 33px; padding-left: 11px; border: 2px solid #d6d6d6; border-radius: 4px; color: #bbb; }
.searchbox input { flex: 1; }
.searchbox input::placeholder { color: #bbb; opacity: 1; }
.wincontrols { display: flex; align-items: center; justify-content: flex-end; padding-right: 18px; gap: 36px; }
.wincontrols .avatar { margin-right: -6px; }
.avatar { width: 24px; height: 24px; border-radius: 50%; background: #0b7f7c; color: #fff; font-size: 11px; line-height: 24px; text-align: center; }

/* ribbon tabs */
.tabs { flex: none; display: flex; align-items: center; height: 31px; padding: 0 12px 0 22px; gap: 22px; }
.tabs a { color: #222; text-decoration: none; padding-top: 3px; line-height: 19px; border-bottom: 3px solid transparent; white-space: nowrap; font-family: "Noto Sans", sans-serif; }
.tabs .active { font-weight: 600; border-color: #1e7145; margin-left: 4px; margin-right: -2px; }
.share { margin-left: auto; display: flex; align-items: center; gap: 5px; height: 24px; padding: 0 4px; border-radius: 4px; background: #107c41; color: #fff; }

/* ribbon */
.ribbon { flex: none; display: flex; margin: 0 8px; padding: 3px 0 2px; background: #fff; border-radius: 8px; box-shadow: 0 1px 2px #bbb; }
.group { flex: none; display: flex; flex-direction: column; justify-content: space-between; height: 94px; border-right: 1px solid #d4d4d4; }
.body { display: flex; height: 78px; }
.col { display: flex; flex-direction: column; }
.row { display: flex; align-items: center; height: 26px; }
.two { display: flex; flex-direction: column; padding-top: 4px; }
.two .row { height: 32px; }
.label { display: flex; align-items: center; justify-content: center; height: 16px; font-size: 11px; }
.label span { flex: 1; text-align: center; white-space: nowrap; }
.label .launch { width: 10px; height: 10px; margin-right: 2px; }
.ib { flex: none; display: flex; align-items: center; justify-content: center; width: 26px; height: 24px; color: #333; }
.ib svg { overflow: visible; }
.cb { flex: none; display: flex; align-items: center; justify-content: center; width: 12px; height: 24px; }
.cb.slim { width: 8px; }
.vs { width: 1px; height: 24px; margin: 0 1px 0 3px; background: #d4d4d4; }
.vs.tall { height: 64px; margin: 7px 6px 0 5px; }
.big { display: flex; flex-direction: column; align-items: center; }
.combo { display: grid; grid-template-columns: 1fr 14px; align-items: center; height: 24px; border: 1px solid #777; border-radius: 4px; background: #fff; }
.combo select { grid-area: 1 / 1 / 2 / 3; width: 100%; padding-left: 3px; }
.combo svg { grid-area: 1 / 2 / 2 / 3; justify-self: center; pointer-events: none; }

.clipboard { width: 112px; }
.clipboard .big { width: 38px; margin: 4px 3px 0 14px; height: 66px; }
.clipboard .big span { margin: 1px 0 3px; }
.clipboard .cb { margin-left: 4px; }
.font { width: 236px; padding-left: 8px; }
.font .label { margin-left: -8px; }
.gap { gap: 2px; }
.fontname { width: 123px; }
.fontsize { width: 43px; }
.bold { font-weight: 700; }
.ital { font-style: italic; font-family: "Liberation Serif", serif; font-size: 15px; }
.under { text-decoration: underline; }
.fontcolor { margin-left: 3px; }
.alignment { width: 205px; padding-left: 7px; }
.alignment .label { margin-left: -7px; }
.on.ib { border: 1px solid #777; border-radius: 4px; background: #e6e6e6; }
.cb.wide { width: 20px; }
.number { width: 107px; padding-left: 8px; }
.number .label { margin-left: -8px; }
.format { width: 91px; }
.sym { font-size: 18px; }
.sym.pct { margin-left: 2px; }
.styles { width: 184px; padding-left: 12px; }
.styles .label { margin-left: -12px; }
.tb { display: flex; align-items: center; height: 24px; gap: 4px; white-space: nowrap; }
.tb svg:last-child:not(:first-child) { margin-left: -2px; }
.off { color: #aaa; }
.cells { width: 106px; padding-left: 12px; }
.cells .label { margin-left: -12px; }
.cells .cb { margin-left: 12px; }
.editing { width: 106px; padding-left: 7px; }
.editing .label { margin-left: -7px; }
.editing .left { width: 50px; }
.editing .sum { margin-left: 4px; }
.addins { width: 63px; }
.addins .big, .acrobat .big { width: 100%; margin-top: 5px; height: 66px; gap: 5px; }
.acrobat { width: 110px; }
.acrobat .big { margin-top: 7px; height: 70px; gap: 3px; font-size: 11px; }
.collapse { margin: auto 8px 5px auto; width: 14px; height: 14px; }

/* formula bar */
.formulabar { flex: none; display: flex; align-items: flex-start; height: 61px; padding: 8px 8px 0; }
.namebox { display: flex; align-items: center; width: 102px; height: 26px; padding: 1px 4px 0 6px; border: 1px solid #d0d0d0; border-radius: 4px; background: #fff; }
.namebox input { flex: 1; }
.dots { margin: 6px 8px 0; }
.fxbox { display: flex; align-items: center; justify-content: space-between; width: 74px; height: 26px; padding: 0 5px; border: 1px solid #d0d0d0; border-radius: 4px; background: #fff; }
.fx { font: italic 18px/20px "Liberation Serif", serif; }
.formula { flex: 1; display: flex; align-items: flex-start; justify-content: space-between; height: 46px; margin-left: 4px; padding: 4px 3px 0 11px; border: 1px solid #d0d0d0; border-radius: 4px; background: #fff; }
.formula input { flex: 1; font-size: 13px; }

/* sheet */
.sheet { flex: 1; min-height: 0; display: flex; }
.gridwrap { flex: 1; min-width: 0; overflow: hidden; background: #fff; border-bottom: 1px solid #d0d0d0; }
.grid { table-layout: fixed; width: 1262px; border-collapse: separate; border-spacing: 0; }
.c-h { width: 26px; }
.c-a { width: 135px; }
.c-b { width: 141px; }
.c-x { width: 64px; }
.grid th { height: 20px; padding: 0; background: #efefef; font-weight: 400; color: #444; border-right: 1px solid #d9d9d9; border-bottom: 1px solid #d9d9d9; }
.grid thead th { border-bottom-color: #aaa; }
.grid thead .sel { background: #dfdfdf; color: #1e7145; border-bottom: 2px solid #1e7145; }
.corner svg { margin: 4px 0 0 10px; }
.grid tbody th { vertical-align: bottom; color: #2a2ad8; line-height: 17px; border-right-color: #aaa; }
.grid tbody .un { color: #444; }
.grid tbody .cur { background: #dfdfdf; }
.grid td { height: 20px; padding: 0 0 0 2px; vertical-align: bottom; line-height: 17px; white-space: nowrap; border-right: 1px solid #d9d9d9; border-bottom: 1px solid #d9d9d9; color: #111; }
.grid td:nth-child(2) { font-size: 13px; }
.lines { line-height: 20px; margin-bottom: -1px; }
.grid .rest { border-right: 0; background: repeating-linear-gradient(90deg, transparent 0 63px, #d9d9d9 63px 64px); }
.grid .head td:not(.rest) { background-color: #bdd7ee; }
.hc { display: flex; align-items: center; justify-content: space-between; height: 19px; font-size: 12px; line-height: 20px; }
.hc.mid { padding-left: 14px; }
.hc.mid b { flex: 1; text-align: center; }
.filter { width: 17px; height: 17px; border: 1px solid #aaa; background: #fff; }
.err { background: linear-gradient(135deg, #107c10 5px, transparent 5px) no-repeat; }
.grid .active { position: relative; outline: 2px solid #1e7145; outline-offset: -1px; }
.handle { position: absolute; right: -3px; bottom: -3px; width: 6px; height: 6px; background: #1e7145; border: 1px solid #fff; border-width: 1px 0 0 1px; }
.vscroll { flex: none; width: 22px; display: flex; flex-direction: column; align-items: center; padding: 5px 0 2px; }
.vthumb { width: 9px; height: 52px; margin-top: 4px; border-radius: 5px; background: #6b6b6b; }
.down { margin-top: auto; }

/* sheet tabs */
.sheettabs { flex: none; display: flex; align-items: center; height: 31px; padding: 0 23px 2px 22px; }
.nav { width: 20px; height: 20px; margin-right: 12px; }
.sheettab { align-self: flex-start; height: 28px; margin-left: 30px; padding: 0 8px; border-radius: 0 0 5px 5px; background: #fff; font-weight: 700; }
.sheettab span { display: block; border-bottom: 3px solid #1e7145; line-height: 20px; }
.tabsep { width: 1px; height: 16px; margin: 0 40px 0 1px; background: #ccc; }
.add { width: 20px; height: 20px; }
.hscroll { flex: 0 1 488px; display: flex; align-items: center; margin-left: auto; }
.hl { margin: 0 5px 0 18px; }
.htrack { flex: 1; margin-right: 5px; }
.hthumb { display: block; width: 94%; height: 9px; border-radius: 5px; background: #6b6b6b; }

/* status bar */
.status { flex: none; display: flex; align-items: center; height: 22px; padding: 0 7px 0 12px; background: #f5f5f5; font-size: 11px; color: #333; }
.status > span { margin-right: 15px; white-space: nowrap; }
.acc { display: flex; align-items: center; gap: 3px; margin-left: 4px; }
.views { display: flex; align-self: stretch; margin-left: auto; }
.view { display: flex; align-items: center; justify-content: center; width: 40px; }
.view.on { background: #dadada; }
.status .zm { width: 10px; margin: 0 4px; font-size: 16px; text-align: center; }
.status .pc { margin: 0 0 0 8px; }
.zoom { width: 100px; height: 14px; }
.zoom::-webkit-slider-runnable-track { height: 12px; background: linear-gradient(#777, #777) center / 100% 1px no-repeat; }
.zoom::-webkit-slider-thumb { appearance: none; width: 5px; height: 12px; background: #555; }

/* taskbar */
.taskbar { flex: none; display: flex; height: 40px; background: #1c1c1c; color: #fff; }
.task { display: flex; align-items: center; justify-content: center; width: 48px; }
.tsearch { display: flex; align-items: center; gap: 10px; width: 288px; padding: 1px 0 0 11px; border: 1px solid #ccc; background: #f0f0f0; color: #333; font-size: 14px; }
.tsearch input { flex: 1; }
.tsearch input::placeholder { color: #444; opacity: 1; }
.apps { display: flex; gap: 9px; margin-left: 7px; }
.app { display: flex; align-items: center; justify-content: center; width: 40px; border-top: 2px solid transparent; border-bottom: 2px solid transparent; }
.app.run { border-bottom-color: #76b3e0; }
.tray { display: flex; align-items: center; margin-left: auto; padding-right: 4px; }
.temp { margin: 0 26px 0 8px; font-size: 13px; }
.tray > svg + svg { margin-left: 8px; }
.clock { display: flex; flex-direction: column; align-items: center; width: 54px; margin: 0 16px 0 10px; font-size: 11px; line-height: 18px; white-space: nowrap; }
.peek { width: 1px; height: 40px; margin-left: 9px; background: #555; }

/* find and replace window */
.dialog { position: absolute; left: 274px; top: 421px; width: 452px; border: 1px solid #666; background: #f0f0f0; box-shadow: 2px 4px 12px #0006; font-size: 11px; color: #000; }
.dtitle { display: flex; align-items: center; height: 30px; padding: 0 2px 0 8px; background: #fff; }
.dtitle span { flex: 1; }
.dtitle .plain { width: 42px; height: 28px; margin-left: 4px; }
.dtabs { display: flex; align-items: flex-end; height: 29px; padding: 0 6px; }
.dtab { height: 20px; padding: 0 6px; border: 1px solid #ddd; border-bottom: 0; }
.dtab.on { height: 22px; width: 55px; background: #fff; }
.panel { margin: 0 8px 0 6px; height: 143px; padding: 8px 7px 0 8px; background: #fff; border: 1px solid #ddd; border-top-color: #e4e4e4; }
.find { display: flex; align-items: center; height: 20px; }
.find label { width: 78px; }
.field { display: grid; grid-template-columns: 1fr 18px; height: 20px; border: 1px solid #888; background: #fff; }
.drop { display: flex; align-items: center; justify-content: center; border: 1px solid #999; background: #e1e1e1; pointer-events: none; }
.find .field { width: 149px; }
.typed { display: flex; align-items: center; padding-left: 3px; min-width: 0; }
.typed input { width: 93px; }
.caret { width: 1px; height: 13px; background: #000; }
.preview { width: 91px; height: 20px; margin: 0 10px 0 9px; border: 1px solid #000; line-height: 18px; text-align: center; }
.btn { display: flex; align-items: center; justify-content: center; width: 74px; height: 22px; border: 1px solid #adadad; background: #e1e1e1; white-space: nowrap; }
.fmt { width: 82px; height: 18px; padding-left: 14px; }
.fmt svg { margin-left: 11px; }
.opts { display: flex; margin-top: 33px; }
.selects { display: grid; grid-template-columns: 50px 91px; row-gap: 3px; align-items: center; }
.selects .field { height: 22px; }
.selects select { grid-area: 1 / 1 / 2 / 3; width: 100%; height: 20px; padding-left: 3px; }
.selects .drop { grid-area: 1 / 2 / 2 / 3; }
.checks { flex: 1; display: flex; flex-direction: column; margin-top: -2px; padding: 0 0 0 9px; }
.checks label { display: flex; align-items: center; height: 19px; white-space: pre; }
.checks input { width: 13px; height: 13px; margin-right: 4px; border: 1px solid #333; background: #fff; }
.options { width: 78px; margin: 13px 0 0 auto; }
.dfoot { display: flex; justify-content: flex-end; gap: 10px; padding: 9px 7px 8px; }
.btn.primary { border: 2px solid #0078d7; }
.btn.close { margin-left: 9px; }
```
